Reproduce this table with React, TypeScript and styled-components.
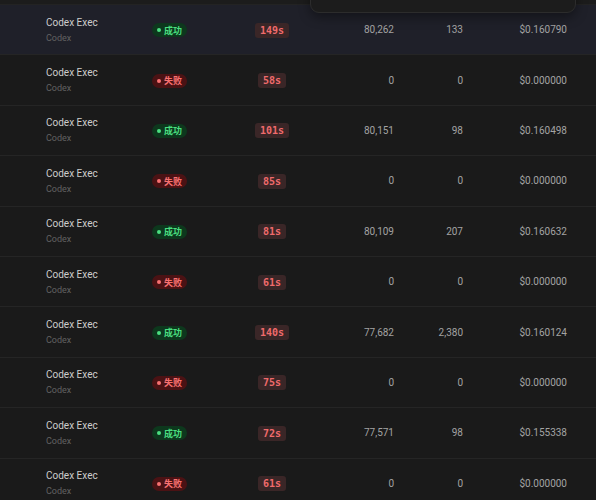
import styled, { createGlobalStyle } from 'styled-components';

type Run = {
    ok: boolean;
    secs: number;
    input: string;
    output: string;
    cost: string;
};

const runs: Run[] = [
    { ok: true, secs: 149, input: '80,262', output: '133', cost: '$0.160790' },
    { ok: false, secs: 58, input: '0', output: '0', cost: '$0.000000' },
    { ok: true, secs: 101, input: '80,151', output: '98', cost: '$0.160498' },
    { ok: false, secs: 85, input: '0', output: '0', cost: '$0.000000' },
    { ok: true, secs: 81, input: '80,109', output: '207', cost: '$0.160632' },
    { ok: false, secs: 61, input: '0', output: '0', cost: '$0.000000' },
    { ok: true, secs: 140, input: '77,682', output: '2,380', cost: '$0.160124' },
    { ok: false, secs: 75, input: '0', output: '0', cost: '$0.000000' },
    { ok: true, secs: 72, input: '77,571', output: '98', cost: '$0.155338' },
    { ok: false, secs: 61, input: '0', output: '0', cost: '$0.000000' },
];

export default function App() {
    return (
        <>
            <GlobalStyle />
            <Page>
                <TopEdge />
                <Dropdown />
                {runs.map((run, i) => (
                    <Row key={i} $active={i === 0}>
                        <NameCell>
                            <Name>Codex Exec</Name>
                            <Sub>Codex</Sub>
                        </NameCell>
                        <StatusCell>
                            <Status $ok={run.ok}>
                                <Dot $ok={run.ok} />
                                {run.ok ? '成功' : '失败'}
                            </Status>
                        </StatusCell>
                        <DurationCell>
                            <Duration>{run.secs}s</Duration>
                        </DurationCell>
                        <Num>{run.input}</Num>
                        <Num>{run.output}</Num>
                        <Num>{run.cost}</Num>
                    </Row>
                ))}
            </Page>
        </>
    );
}

const GlobalStyle = createGlobalStyle`
    html, body {
        margin: 0;
        padding: 0;
        background: #1a1a1a;
        font-family: Roboto, "Noto Sans CJK SC", sans-serif;
        overflow: hidden;
    }
`;

const Page = styled.div`
    position: relative;
    width: 596px;
    height: 500px;
    overflow: hidden;
    background: #1a1a1a;
`;

const TopEdge = styled.div`
    height: 4px;
    background: #1c1c1c;
    border-bottom: 1px solid #232323;
`;

const Dropdown = styled.div`
    position: absolute;
    left: 310px;
    top: -40px;
    width: 266px;
    height: 53px;
    box-sizing: border-box;
    background: #1c1c1c;
    border: 1px solid #2c2c2c;
    border-radius: 9px;
    box-shadow: 0 4px 12px rgba(0, 0, 0, 0.4);
    z-index: 2;
`;

const Row = styled.div<{ $active: boolean }>`
    display: grid;
    grid-template-columns: 152px 78px 84px 80px 69px 104px 29px;
    align-items: center;
    height: 50.4px;
    box-sizing: border-box;
    border-bottom: 1px solid #252525;
    background: ${(p) => (p.$active ? '#1f2029' : '#1a1a1a')};
`;

const NameCell = styled.div`
    padding-left: 46px;
    display: flex;
    flex-direction: column;
    gap: 3px;
    margin-top: 1px;
`;

const Name = styled.span`
    font-size: 10px;
    color: #cdcdcd;
    line-height: 12px;
`;

const Sub = styled.span`
    font-size: 9px;
    color: #626262;
    line-height: 12px;
`;

const StatusCell = styled.div`
    display: flex;
`;

const Status = styled.span<{ $ok: boolean }>`
    display: inline-flex;
    align-items: center;
    gap: 3px;
    height: 14px;
    padding: 0 5px 0 5px;
    border-radius: 7px;
    font-size: 9px;
    font-weight: 700;
    margin-top: 1px;
    color: ${(p) => (p.$ok ? '#4ade80' : '#f87171')};
    background: ${(p) => (p.$ok ? '#0d381d' : '#4b1214')};
`;

const Dot = styled.span<{ $ok: boolean }>`
    width: 4px;
    height: 4px;
    border-radius: 50%;
    background: ${(p) => (p.$ok ? '#4ade80' : '#f87171')};
`;

const DurationCell = styled.div`
    display: flex;
    justify-content: center;
`;

const Duration = styled.span`
    font-family: "DejaVu Sans Mono", monospace;
    font-size: 10px;
    font-weight: 700;
    line-height: 15px;
    padding: 0 5px;
    border-radius: 3px;
    margin-top: 1px;
    color: #f06b6c;
    background: #3a2627;
`;

const Num = styled.div`
    text-align: right;
    font-size: 10px;
    color: #a3a3a3;
`;
